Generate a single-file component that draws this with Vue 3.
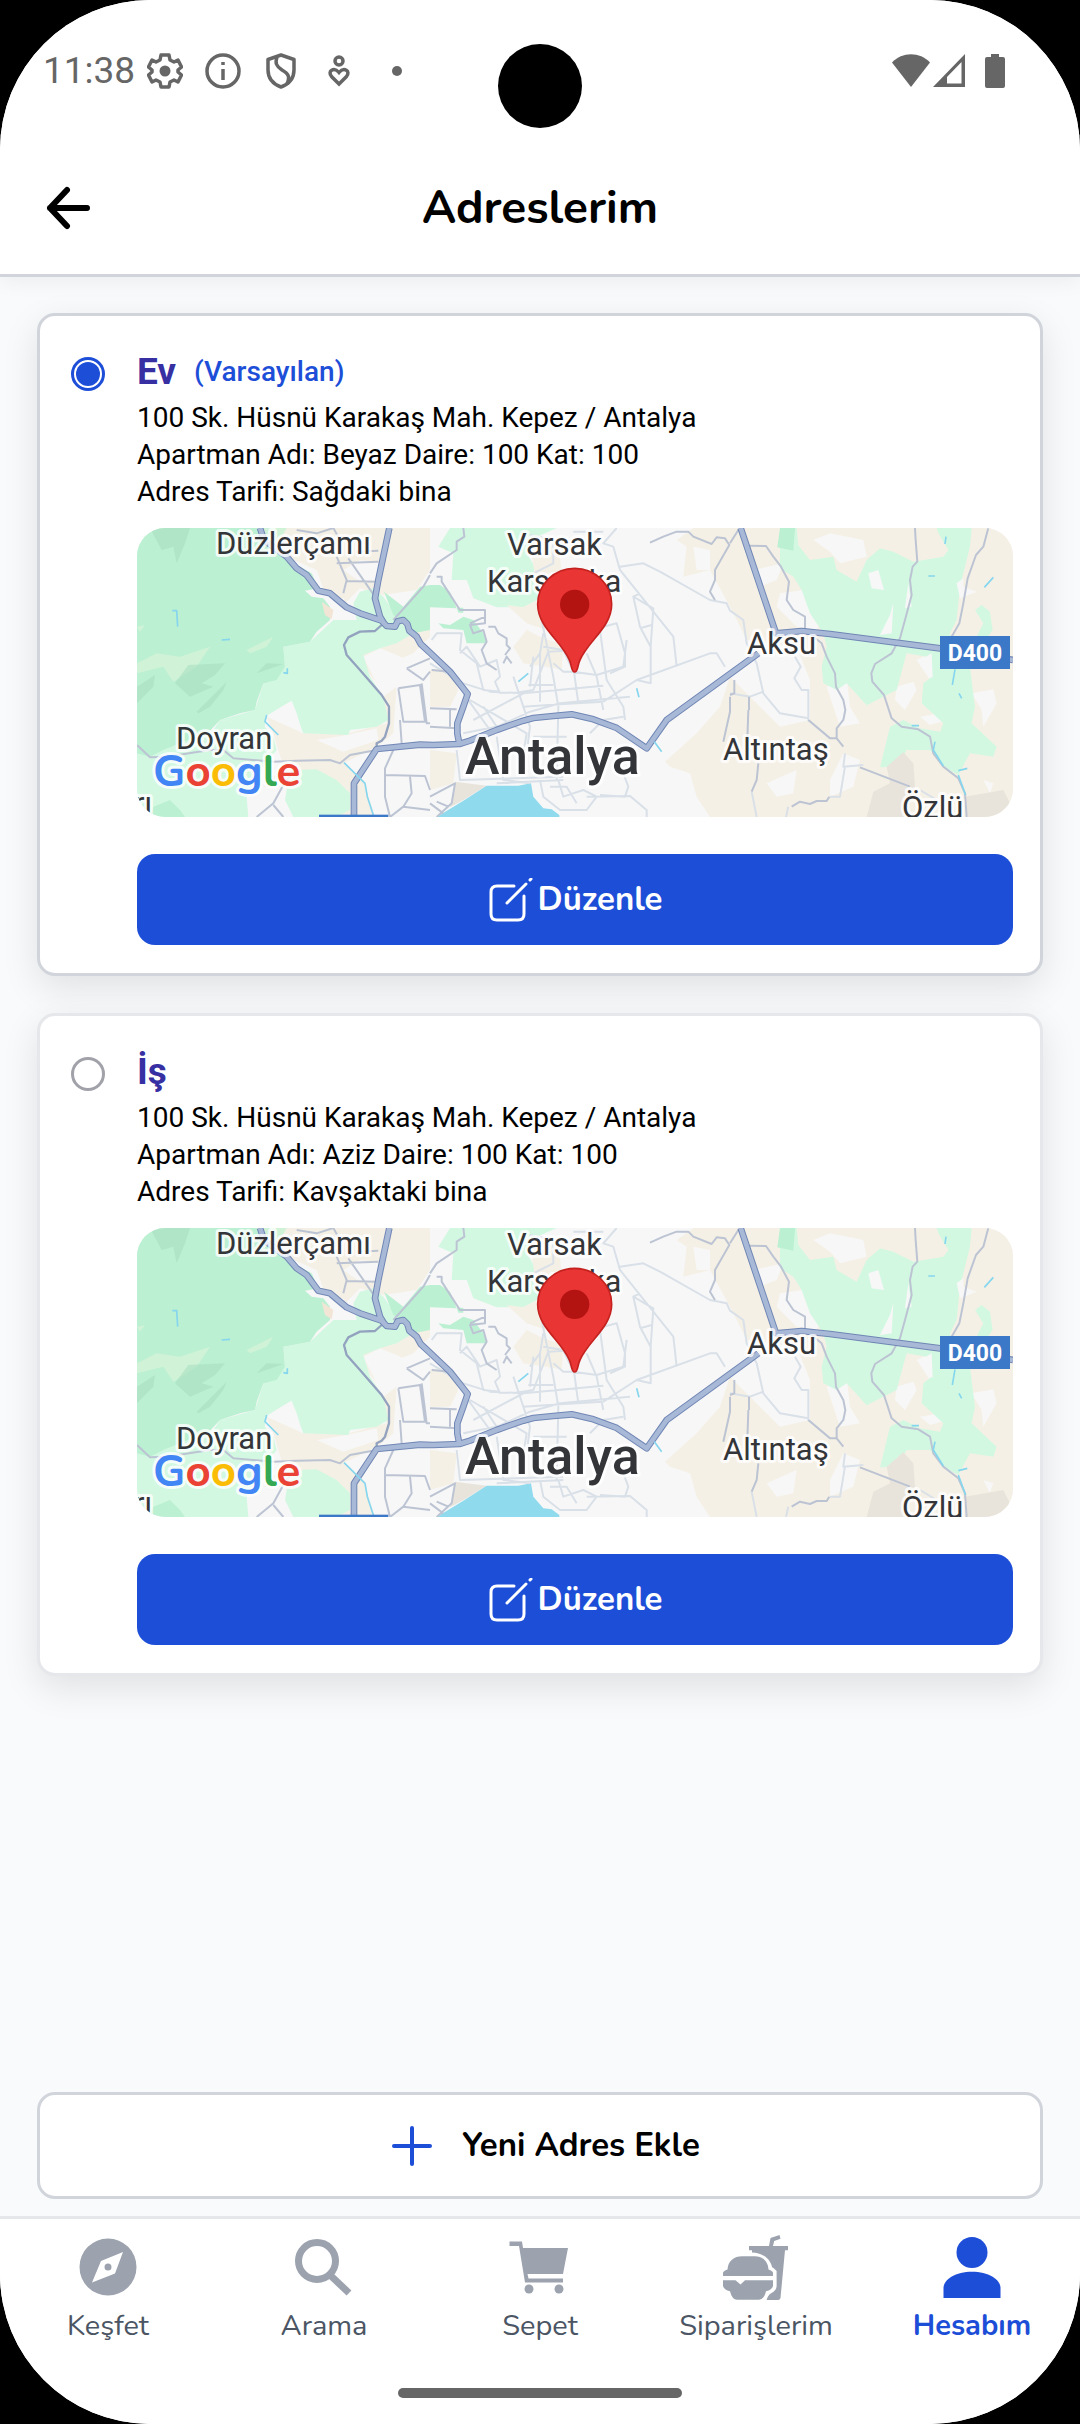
<script setup>
import { ref } from 'vue'

const selected = ref('ev')
const activeTab = ref('hesabim')

const addresses = [
  {
    id: 'ev',
    name: 'Ev',
    isDefault: true,
    lines: [
      '100 Sk. Hüsnü Karakaş Mah. Kepez / Antalya',
      'Apartman Adı: Beyaz Daire: 100 Kat: 100',
      'Adres Tarifi: Sağdaki bina',
    ],
  },
  {
    id: 'is',
    name: 'İş',
    isDefault: false,
    lines: [
      '100 Sk. Hüsnü Karakaş Mah. Kepez / Antalya',
      'Apartman Adı: Aziz Daire: 100 Kat: 100',
      'Adres Tarifi: Kavşaktaki bina',
    ],
  },
]

const tabs = [
  { id: 'kesfet', label: 'Keşfet' },
  { id: 'arama', label: 'Arama' },
  { id: 'sepet', label: 'Sepet' },
  { id: 'siparislerim', label: 'Siparişlerim' },
  { id: 'hesabim', label: 'Hesabım' },
]

/* Map layers, drawn at three units per pixel. */
const areas = [
  { c: 'beige', d: 'M420 24H900V150L860 210L760 225L690 205L640 255L590 235L560 150L470 110Z' },
  { c: 'beige', d: 'M700 380L850 335L900 330V350L850 400L800 420L740 390L730 420L800 500L790 640L740 680L640 730L700 780L735 891H350L400 800L460 740L430 640L410 590L520 640H655L770 610L750 500L700 440Z' },
  { c: 'white', d: 'M560 660L650 645L740 625L745 660L640 695ZM340 850L400 800L465 800L490 850V891H350ZM700 410L750 385L800 405L850 430L900 400V891H760L740 760L790 690L800 500L760 530ZM640 150L690 120L745 125V180L690 185ZM580 225L640 235L655 295L600 270Z' },
  { c: 'green', d: 'M460 380L540 365L610 300L680 300L670 250L690 215L730 205L760 230L830 330L850 340L800 370L750 385L700 405L720 470L760 530L775 600L740 620L660 630L655 645L520 640L480 545L430 575L405 590V620L270 600L375 570L400 490L465 440Z' },
  { c: 'green', d: 'M21 690L250 630L270 600L400 615L430 650L440 690L400 740L350 830L355 891H21ZM470 810L500 750L560 748L620 780L660 820V870L620 891H490L465 840Z' },
  { c: 'white', d: 'M428 577L485 542L500 580L518 640L470 610Z' },
  { c: 'forest', d: 'M21 24H380L400 60L470 110L500 135L545 160L565 205L525 212L545 230L580 235L600 260L600 300L560 335L540 365L460 380L465 440L440 480L400 490L380 545L375 570L330 580L270 600L240 632L100 690L60 710L21 700Z' },
  { c: 'forest', d: 'M762 215L820 260L870 200L900 195H930L960 215L980 265L900 262V330L850 340L820 300L790 285ZM60 891L70 860L120 840L150 870L165 891Z' },
  { c: 'meadow', d: 'M21 430L80 400L150 410L240 380L200 440L130 485L100 440L21 460ZM380 24H470L450 60L420 70ZM350 390L430 350L410 380L360 400ZM21 320L45 315L30 335Z' },
  { c: 'ridge', d: 'M21 500L75 465L70 500L21 550ZM135 490L175 435L285 430L255 465L215 490L250 500L180 530ZM200 575L290 485L280 510L240 560L205 580ZM380 460L410 430L460 432ZM60 24H180L165 70L140 130L130 80L95 90Z' },
  { c: 'peach', d: 'M575 245L610 270L605 298L585 285Z' },
  { c: 'green', d: 'M925 80L960 24H1280L1200 60L1190 100L1215 140L1205 180L1240 230L1180 262L1100 262L1030 235L1010 180H965L970 100Z' },
  { c: 'beige', d: 'M1200 70L1250 60L1290 110L1300 230L1240 290L1250 330L1190 310L1130 255L1180 262L1240 230L1215 170ZM1150 380L1190 330L1230 350L1300 375L1295 448L1180 430ZM900 450L960 440L985 510L960 560H900ZM900 690L980 700L970 790L900 810Z' },
  { c: 'forest', d: 'M925 310L960 315L1000 290L1030 300L1060 340L1070 370H1010L1000 330L940 325ZM980 263H1000V278H985Z' },
  { c: 'stone', d: 'M975 785L1070 797L1000 840L960 862Z' },
  { c: 'beige', d: 'M1560 24H2649V891H1740L1700 830L1680 760L1620 740L1605 725L1700 640L1770 560L1800 470L1950 620L2040 600V480L2000 380L1850 360L1800 260L1740 150L1660 170L1670 80L1640 60L1690 24Z' },
  { c: 'white', d: 'M1560 24H1690L1640 60L1600 100ZM1690 80L1740 90L1740 150H1700ZM2050 60L2100 40L2200 60L2210 110L2130 130L2100 95ZM1950 220L2020 210L2080 280L2060 330L2000 320L1940 260ZM1870 150L1960 130L1940 180L1890 200ZM2300 500L2350 485L2360 510L2325 570L2295 540ZM2360 420L2400 400L2410 450L2400 480ZM2525 520L2590 508L2600 550L2560 620L2555 570ZM2580 820L2560 780L2590 790ZM2090 500L2150 470L2160 560L2190 610L2130 620ZM2140 700L2190 720L2170 800L2100 830L2100 780ZM1910 790L2000 750L1990 820L1940 830ZM2370 590L2430 580L2435 605L2400 615Z' },
  { c: 'green', d: 'M1950 24H2000L2005 75L2040 120L2110 110L2120 150L2180 185L2210 120L2250 85L2290 95L2350 125L2440 110L2455 90L2425 40L2420 24H2525L2520 80L2490 200L2480 300L2460 340L2480 440H2520L2535 560L2525 610L2600 680L2590 710L2520 700L2485 765L2440 740L2400 690H2330L2300 740L2250 742L2280 620L2320 600L2370 625L2430 635L2440 610L2375 550L2380 490L2405 470L2390 410L2330 400L2300 510L2210 556L2150 490L2120 510L2080 490L2075 440L2090 380L2080 340L2040 280L2015 210L1990 170L1950 145ZM2535 270L2555 255L2580 275L2588 330L2560 370L2535 360L2560 310Z' },
  { c: 'forest', d: 'M1950 24H1995L1990 92L1942 82Z' },
  { c: 'white', d: 'M2335 190L2345 260L2325 265ZM2280 285L2290 250L2285 340L2250 345ZM2365 425L2405 400L2408 475ZM2480 190L2500 175V200L2540 215L2490 235ZM2215 160L2245 150L2262 210L2225 205Z' },
  { c: 'stone', d: 'M2210 891L2230 815L2280 790L2270 740L2320 697L2350 730L2355 800L2330 891ZM2505 830L2620 810L2640 850L2600 891H2512Z' },
  { c: 'water', d: 'M920 891L1000 842L1070 797H1165L1203 790L1210 830L1240 865L1265 868L1288 885V891Z' },
]

const roads = [
  { c: 'street', d: 'M905 360L920 340H995L990 390L1040 430L1060 510L1110 515M990 400L1010 380L1050 440L1100 420L1110 470L1095 485L1110 520M900 430L1000 490L1080 515L1180 520L1420 497M1000 520L1080 630L1200 575L1290 550L1500 530M1030 600L1180 520M1060 560L1100 620L1080 640M1020 540L1190 640L1180 700M1150 470L1200 620L1190 700M1150 520L1210 510L1255 395L1340 390M1195 495H1270M1210 410L1200 500M1230 395V545M1235 300L1270 470L1285 560L1280 780M1240 380L1300 390L1330 455L1400 465L1480 440L1490 360M1330 440L1345 550M1370 400L1400 470L1420 570M1410 330L1430 480L1480 560L1485 600M1420 320L1460 310L1485 400V440L1440 460M1270 430L1300 455L1340 455M1180 560L1300 552L1420 545M1000 640L1200 600M1210 650H1310M1100 790L1300 780M1230 780L1240 830L1290 870H1370L1400 830L1360 810L1300 830L1285 780M1370 830L1500 828L1550 870V891M1260 800L1310 800L1340 850M1480 760L1495 800L1485 830L1410 825M1380 640L1420 600L1480 590M1100 650L1120 780L1200 790M980 690L990 780L1300 770M1420 545L1520 480L1740 400L1760 400L1785 440M1520 480L1562 490V380L1570 265L1510 230L1530 320L1562 380M1530 325L1565 315M1510 230L1530 220M1470 140L1540 130L1590 155L1740 240L1790 250L1800 272L1840 300L1850 370L1880 430L1900 520L1950 580L2035 595M1470 150L1450 80L1420 70L1460 24M1470 150L1630 350L1640 440M1270 60V130L1210 160M1330 35H1420M1200 45L1270 60M1240 340L1230 400L1200 440M1800 520L1860 530L1900 515M1995 410L2012 440L1993 475L2015 510H2035V600L2100 655M2145 700L2140 740L2200 735M1865 815L1880 891M1968 891L1975 860M2145 740L2130 830H2100M2370 810L2420 840' },
  { c: 'lane', d: 'M21 675L60 712L110 710L240 690H280L310 715L430 725L500 722L600 720L630 730L660 705L740 690M620 110L650 180L640 220M620 130L745 125M650 183L740 185M655 115L735 230M680 95L745 92M610 24L630 60M500 30L560 40L610 24M790 300L880 200L900 165M830 445L900 415M830 445L880 480L900 455M805 505L870 495L885 605L820 605L805 505M875 490L890 610H900M810 600L815 670M790 690L765 745V830L780 891M765 765L885 768L900 810M840 770L845 820L820 860L780 891M820 860L900 870M380 891L430 850L460 795L500 740M430 855L460 891M920 170H935V185L990 270H1065V310L1020 315L1030 340L1060 330L1070 365L1055 390L1070 430L1100 450M1065 290L1020 310M1075 320H1095L1105 340L1130 355V375L1140 385L1125 405M1145 430L1130 410L1120 430M900 565L980 568M900 620L980 625M960 570V620M905 450L960 455M1000 24L1003 50L980 65V90L920 130L900 160M900 830L975 790L965 850L920 891M920 845L955 860M900 850L940 880M1800 70L1825 30M1860 77L1908 78L1930 110L1953 140L1977 185L1970 240L1990 270L2025 290V330L2075 370L2090 410L2115 460L2118 500L2140 540L2146 570L2140 600L2120 625V655L2140 680M2035 600L2100 655H2120M2355 24L2357 60L2362 125L2348 140L2340 180L2345 225L2325 300L2310 355L2285 400L2235 432L2224 460L2227 485L2262 525L2285 595L2315 620L2365 628L2400 650L2410 700L2440 740L2485 775L2505 820L2510 891M2575 24L2560 80L2538 105L2513 175L2500 250L2488 310L2465 350M2190 742L2340 800M1985 860L2010 845L2040 852L2060 843H2090L2098 830M1857 570V530M1855 570L1852 660M1813 480V520L1800 525M1885 730L1880 780L1865 815M1560 68L1600 50L1640 35H1675L1690 50L1745 72L1760 52L1785 55L1798 75L1755 150V180L1740 215L1755 240M1800 530V575L1780 665' },
  { c: 'bypass', d: 'M755 315L735 333L690 335L655 352L642 375L650 405L690 450L755 525L777 560V610L765 650L755 662L740 670V685' },
  { c: 'highway', d: 'M390 24L402 60L470 110L500 145L530 165L565 212L600 220L650 262L690 280L755 302L770 318L795 320L803 304L820 300L832 312L838 332L860 350L872 372L900 398L960 455L1013 522L1000 560L982 610V640L988 672M778 24L745 180L735 235L750 290L762 310M672 891V790L740 687L870 674L910 675L988 672L1020 662L1100 630L1180 602L1210 594L1270 588L1325 583L1390 598L1460 624L1550 685L1610 600L1800 462L1885 400M1832 24L1938 340L2015 333L2100 342L2430 385L2649 420' },
  { c: 'stream', d: 'M127 272H140L143 320M275 360L300 358M460 458L472 460V445M410 585L405 605L445 645M642 728L705 790L712 830L730 885M1165 485L1195 460M1520 505L1527 532M1573 665L1595 695M2448 50L2445 72M2395 168H2415M2563 202L2590 172M2475 448L2467 495M2487 520L2495 535M2345 617H2367M2415 665L2410 690L2440 738M2485 752L2512 745M2485 765L2507 825' },
]

/* Map labels in pixels. */
const labels = [
  { t: 'Düzlerçamı', x: 79, y: 26 },
  { t: 'Doyran', x: 39, y: 221 },
  { t: 'rı', x: -3, y: 286 },
  { t: 'Varsak', x: 370, y: 27 },
  { t: 'Karşıyaka', x: 350, y: 64 },
  { t: 'Aksu', x: 610, y: 126 },
  { t: 'Altıntaş', x: 586, y: 232 },
  { t: 'Özlü', x: 765, y: 290 },
]
</script>

<template>
  <div class="screen">
    <div class="camera"></div>

    <div class="status">
      <span class="clock">11:38</span>
      <div class="notices">
        <svg viewBox="0 0 36 36" class="glyph line">
          <path d="M14 2H22L23 7L27 9L31 7L34.500 14L31 17V19L34.500 22L31 29L27 27L23 29L22 34H14L13 29L9 27L5 29L1.500 22L5 19V17L1.500 14L5 7L9 9L13 7Z" stroke-linejoin="round" />
          <circle cx="18" cy="18" r="5.500" class="solid" stroke="none" />
        </svg>
        <svg viewBox="0 0 36 36" class="glyph line">
          <circle cx="18" cy="18" r="16" />
          <path d="M18 16V27M18 9V12" />
        </svg>
        <svg viewBox="0 0 36 36" class="glyph line">
          <path d="M18 2L31 6.500V17C31 25 26 31 18 34C10 31 5 25 5 17V6.500Z" stroke-linejoin="round" />
          <path d="M14 4C12 10 13 13 19 17C26 21 27 24 24 31" />
        </svg>
        <svg viewBox="0 0 36 36" class="glyph line">
          <circle cx="18" cy="8" r="4" />
          <path d="M18 31L10.500 23.500C6 18 13 13.500 18 19.500C23 13.500 30 18 25.500 23.500Z" />
        </svg>
        <svg viewBox="0 0 36 36" class="glyph">
          <circle cx="18" cy="18" r="5" />
        </svg>
      </div>
      <div class="signals">
        <svg viewBox="0 0 40 36" class="signal wide">
          <path d="M1 9.500C11 -1.500 29 -1.500 39 9.500L20 34Z" />
        </svg>
        <svg viewBox="0 0 36 36" class="signal">
          <path d="M34 1V34H2ZM30.500 9L16 24V30.500H30.500Z" fill-rule="evenodd" />
        </svg>
        <svg viewBox="0 0 20 36" class="signal slim">
          <path d="M6 1H14V4H18Q20 4 20 6V33Q20 35 18 35H2Q0 35 0 33V6Q0 4 2 4H6Z" />
        </svg>
      </div>
    </div>

    <header class="topbar">
      <button class="back" type="button" aria-label="Geri">
        <svg viewBox="0 0 44 44">
          <path d="M41 22H4M21 4L4 22L21 40" />
        </svg>
      </button>
      <h1>Adreslerim</h1>
    </header>

    <main class="content">
      <article
        v-for="a in addresses"
        :key="a.id"
        class="card"
        :class="{ selected: selected === a.id }"
      >
        <input :id="a.id" v-model="selected" type="radio" name="address" :value="a.id" />
        <div class="details">
          <label class="name" :for="a.id">
            <strong>{{ a.name }}</strong>
            <span v-if="a.isDefault">(Varsayılan)</span>
          </label>
          <p v-for="line in a.lines" :key="line">{{ line }}</p>

          <svg class="map" viewBox="0 0 876 289" preserveAspectRatio="xMidYMid slice">
            <g transform="translate(-7 -8) scale(0.33333)">
              <path v-for="(s, i) in areas" :key="'a' + i" :class="s.c" :d="s.d" />
              <template v-for="r in roads" :key="r.c">
                <path v-if="r.c === 'highway'" class="casing" :d="r.d" />
                <path :class="r.c" :d="r.d" />
              </template>
              <rect class="badge" x="567" y="884" width="208" height="10" />
            </g>
            <text v-for="l in labels" :key="l.t" class="place" :x="l.x" :y="l.y">{{ l.t }}</text>
            <text class="city" x="328" y="246">Antalya</text>
            <rect class="badge" x="803" y="108" width="70" height="33" />
            <text class="route" x="838" y="133" text-anchor="middle">D400</text>
            <text class="brand" x="16" y="258"><tspan fill="#4285f4">G</tspan><tspan fill="#ea4335">o</tspan><tspan fill="#fbbc05">o</tspan><tspan fill="#4285f4">g</tspan><tspan fill="#34a853">l</tspan><tspan fill="#ea4335">e</tspan></text>
            <g transform="translate(-7 -8) scale(0.33333)">
              <path class="pin" d="M1334 456C1323 456 1326 435 1318 420C1294 362 1223 322 1223 253A111 108 0 0 1 1445 253C1445 322 1374 362 1350 420C1342 435 1345 456 1334 456Z" />
              <circle cx="1334" cy="253" r="44" fill="#b31412" />
            </g>
          </svg>

          <button class="edit" type="button">
            <svg viewBox="0 0 44 44">
              <path d="M25 8H8Q2 8 2 14V36Q2 42 8 42H29Q35 42 35 36V18M18 25L37 6M41 2L42 1" />
            </svg>
            <span>Düzenle</span>
          </button>
        </div>
      </article>
    </main>

    <div class="actions">
      <button class="add" type="button">
        <svg viewBox="0 0 40 40"><path d="M20 2V38M2 20H38" /></svg>
        <span>Yeni Adres Ekle</span>
      </button>
    </div>

    <nav class="tabs">
      <a
        v-for="t in tabs"
        :key="t.id"
        href="#"
        :class="{ active: activeTab === t.id }"
        @click.prevent="activeTab = t.id"
      >
        <svg viewBox="0 0 68 68">
          <path v-if="t.id === 'kesfet'" fill-rule="evenodd" d="M34 5.500A28.500 28.500 0 1 1 34 62.500A28.500 28.500 0 1 1 34 5.500ZM49 19L27 28L18 49.500L41 40.500ZM34 30.500A3.500 3.500 0 1 1 34 37.500A3.500 3.500 0 1 1 34 30.500Z" />
          <g v-else-if="t.id === 'arama'" fill="none" stroke="currentColor" stroke-width="7">
            <circle cx="27" cy="28" r="18.500" />
            <path d="M40 42L59 60" />
          </g>
          <g v-else-if="t.id === 'sepet'">
            <path d="M3.500 8.500H16L17 15H62L57 41H21.500L22.500 45.500H57V49.500H19L13 13H3.500Z" />
            <circle cx="23" cy="56" r="4.500" />
            <circle cx="53" cy="56" r="4.500" />
          </g>
          <g v-else-if="t.id === 'siparislerim'">
            <path d="M1 43V40Q1 38 5.500 36.500C6 28 12 23.300 20 23.300H33C40 23.300 46 28 46.500 36.500Q51 38 51 40V43Z" />
            <path d="M1 47.300H13.500L18.500 51.500L23 47.300H51V53Q50 57 44 58.300Q42 66.700 37 66.700H15Q10 66.700 8 58.300Q2 57 1 53Z" />
            <path d="M27 13H47L48.500 5L57.500 2L58.500 5.700L52.200 8L51 13H66V17.300H63L58.500 65Q58 67 56 67H44.600Q46 62 48.700 60.500Q54.500 58 54.600 53V38Q53 36 50 34C48 25 40 20 30 19.500V17.300H27Z" />
          </g>
          <g v-else>
            <circle cx="34" cy="19.500" r="15.500" />
            <path d="M5.500 65V55C5.500 46 18 38.700 34 38.700S62.500 46 62.500 55V65Z" />
          </g>
        </svg>
        <span>{{ t.label }}</span>
      </a>
    </nav>

    <div class="home-bar"></div>
  </div>
</template>

<style>
html,
body {
  margin: 0;
  background: #000;
}
</style>

<style scoped>
.screen {
  position: relative;
  display: flex;
  flex-direction: column;
  min-height: 100vh;
  overflow: hidden;
  border-radius: 150px;
  background: #f9fafb;
  color: #000;
  font-family: Roboto, sans-serif;
}

.screen * {
  box-sizing: border-box;
}

button {
  padding: 0;
  border: 0;
  font-family: inherit;
  cursor: pointer;
}

.camera {
  position: absolute;
  z-index: 2;
  top: 44px;
  left: calc(50% - 42px);
  width: 84px;
  height: 84px;
  border-radius: 50%;
  background: #000;
}

.status {
  position: relative;
  z-index: 1;
  display: flex;
  align-items: center;
  height: 142px;
  padding: 0 75px 0 43px;
  background: #fff;
  color: #666;
}

.clock {
  font-size: 37px;
  line-height: 44px;
}

.notices {
  display: flex;
  gap: 22px;
  margin-left: 12px;
}

.signals {
  display: flex;
  align-items: center;
  margin-left: auto;
}

.glyph,
.signal {
  width: 36px;
  height: 36px;
  fill: currentColor;
}

.line {
  fill: none;
  stroke: currentColor;
  stroke-width: 3.5;
}

.solid {
  fill: currentColor;
}

.wide {
  width: 40px;
}

.slim {
  width: 20px;
  margin-left: 18px;
}

.topbar {
  position: relative;
  display: flex;
  align-items: center;
  justify-content: center;
  height: 135px;
  padding: 0;
  border-bottom: 3px solid #d1d5db;
  background: #fff;
  box-shadow: 0 4px 20px rgba(0, 0, 0, 0.06);
}

.topbar h1 {
  margin: 0;
  font-family: Nunito, "Open Sans", sans-serif;
  font-size: 46px;
  font-weight: 700;
  line-height: 60px;
}

.back {
  position: absolute;
  left: 46px;
  width: 44px;
  height: 44px;
  background: none;
}

.back svg {
  display: block;
  fill: none;
  stroke: #000;
  stroke-width: 6;
  stroke-linecap: round;
  stroke-linejoin: round;
}

.content {
  display: flex;
  flex: 1;
  flex-direction: column;
  gap: 37px;
  padding: 36px 37px;
}

.card {
  display: flex;
  align-items: flex-start;
  gap: 32px;
  padding: 32px 27px 28px 31px;
  border: 3px solid #e5e7eb;
  border-radius: 18px;
  background: #fff;
  box-shadow: 0 12px 36px rgba(0, 0, 0, 0.1);
}

.card.selected {
  border-color: #d1d5db;
}

.card input {
  flex: none;
  appearance: none;
  width: 34px;
  height: 34px;
  margin: 9px 0 0;
  padding: 2px;
  border: 3px solid #a1a1aa;
  border-radius: 50%;
  background-clip: content-box;
}

.card input:checked {
  border-color: #1d4ed8;
  background-color: #1d4ed8;
}

.details {
  flex: 1;
  min-width: 0;
}

.name {
  display: flex;
  align-items: center;
  gap: 18px;
  height: 46px;
  margin-bottom: 5px;
}

.name strong {
  color: #3730a3;
  font-size: 37px;
  font-weight: 700;
}

.name span {
  color: #1d4ed8;
  font-size: 28px;
  font-weight: 500;
}

.details p {
  margin: 0;
  font-size: 28px;
  line-height: 37px;
}

.map {
  display: block;
  width: 100%;
  height: 289px;
  margin: 18px 0 37px;
  border-radius: 28px;
  background: #f7f7f7;
}

.white {
  fill: #f7f7f7;
}

.beige {
  fill: #f5f0e5;
}

.green {
  fill: #d3f8e2;
}

.forest {
  fill: #bbf0d2;
}

.meadow {
  fill: #d0f2d6;
}

.ridge {
  fill: #a9dfc0;
  opacity: 0.6;
}

.peach {
  fill: #f3e5d5;
}

.stone {
  fill: #e8e4dc;
}

.water {
  fill: #90daee;
}

.street,
.lane,
.bypass,
.casing,
.highway,
.stream {
  fill: none;
  stroke-linejoin: round;
}

.street {
  stroke: #d9e0e8;
  stroke-width: 6;
}

.lane {
  stroke: #bcc4d3;
  stroke-width: 6;
}

.bypass {
  stroke: #93a3bf;
  stroke-width: 7;
}

.casing {
  stroke: #7086b5;
  stroke-width: 20;
}

.highway {
  stroke: #a8b9d7;
  stroke-width: 14;
}

.stream {
  stroke: #86d6ee;
  stroke-width: 5;
}

.badge {
  fill: #3b78c8;
}

.place,
.city,
.brand {
  fill: #333539;
  stroke: #fff;
  stroke-width: 6;
  stroke-linejoin: round;
  stroke-opacity: 0.8;
  paint-order: stroke;
}

.place {
  font-size: 31px;
}

.city {
  font-size: 52px;
  font-weight: 500;
}

.route {
  fill: #fff;
  font-size: 23px;
  font-weight: 700;
}

.brand {
  font-family: Nunito, Lato, sans-serif;
  font-size: 44px;
  font-weight: 700;
}

.pin {
  fill: #ea3535;
  stroke: #c5221f;
  stroke-width: 5;
}

.edit {
  display: flex;
  align-items: center;
  justify-content: center;
  gap: 4px;
  width: 100%;
  height: 91px;
  padding-left: 2px;
  border-radius: 18px;
  background: #1d4ed8;
  color: #fff;
  font-family: Nunito, "Open Sans", sans-serif;
  font-size: 33px;
  font-weight: 700;
}

.edit svg {
  width: 44px;
  height: 44px;
  fill: none;
  stroke: currentColor;
  stroke-width: 3;
  stroke-linecap: round;
}

.actions {
  padding: 0 37px 17px;
}

.add {
  display: flex;
  align-items: center;
  justify-content: center;
  gap: 30px;
  width: 100%;
  height: 107px;
  padding-left: 12px;
  border: 3px solid #d1d5db;
  border-radius: 18px;
  background: #fff;
  color: #000;
  font-family: Nunito, "Open Sans", sans-serif;
  font-size: 33px;
  font-weight: 700;
}

.add svg {
  width: 40px;
  height: 40px;
  fill: none;
  stroke: #1d4ed8;
  stroke-width: 4;
  stroke-linecap: round;
}

.tabs {
  display: flex;
  height: 208px;
  padding-top: 14px;
  border-top: 3px solid #e5e7eb;
  background: #fff;
}

.tabs a {
  display: flex;
  flex: 1;
  flex-direction: column;
  align-items: center;
  gap: 4px;
  color: #4b5563;
  font-family: Nunito, "Open Sans", sans-serif;
  font-size: 29px;
  line-height: 42px;
  text-decoration: none;
}

.tabs svg {
  width: 68px;
  height: 68px;
  color: #9ca3af;
  fill: currentColor;
}

.tabs .active {
  color: #1d4ed8;
  font-weight: 700;
}

.tabs .active svg {
  color: #1d4ed8;
}

.home-bar {
  position: absolute;
  bottom: 26px;
  left: calc(50% - 142px);
  width: 284px;
  height: 10px;
  border-radius: 5px;
  background: #666;
}
</style>
